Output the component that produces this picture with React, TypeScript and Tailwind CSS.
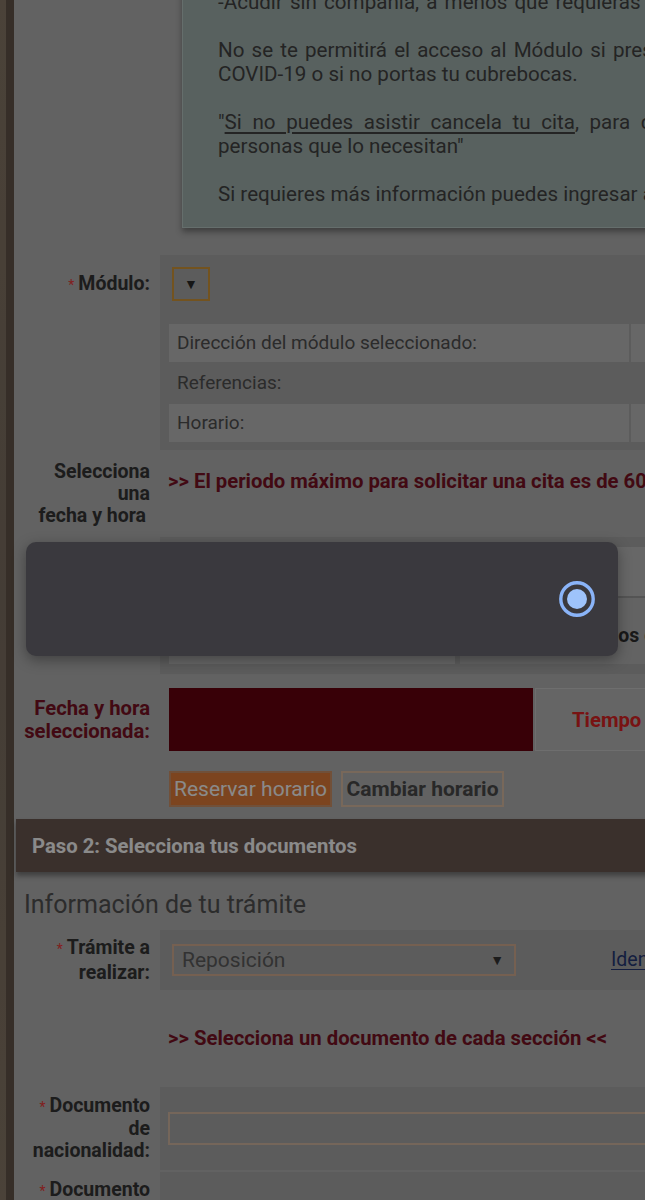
import React from "react";

function Req() {
  return <span className="mr-[4px] text-[14px] font-normal text-[#d83434]">*</span>;
}

export default function App() {
  return (
    <div className="relative h-[1200px] w-[645px] overflow-hidden font-['Roboto','Noto_Sans',sans-serif] text-[19.5px] leading-[22px] text-[#303030]">
      <div className="flex h-full">
        {/* wood strip */}
        <div className="flex w-[14px] shrink-0">
          <div className="w-[6px] bg-gradient-to-b from-[#7d6f5f] via-[#72665a] to-[#7d6f5f]" />
          <div className="w-[8px] bg-[#5a4d43]" />
        </div>

        <div className="w-[886px] shrink-0 bg-[#a3a3a3]">
          {/* info box */}
          <div className="mt-[-35px] ml-[168px] w-[700px] whitespace-nowrap border border-[#a9b8b4] bg-[#93a29e] pt-[24px] pb-[21px] pl-[35px] text-[20.6px] leading-[24px] text-[#3c3c3c] shadow-[0_4px_6px_rgba(0,0,0,0.35)]">
            <p className="[word-spacing:2px]">-Acudir sin compañía, a menos que requieras asistencia.</p>
            <p className="mt-[24px]">
              <span className="[word-spacing:2px]">No se te permitirá el acceso al Módulo si presentas síntomas de</span>
              <br />
              COVID-19 o si no portas tu cubrebocas.
            </p>
            <p className="mt-[24px]">
              <span className="[word-spacing:5.5px]">
                "<span className="underline underline-offset-[3px]">Si no puedes asistir cancela tu cita</span>, para dar oportunidad a otras
              </span>
              <br />
              personas que lo necesitan"
            </p>
            <p className="mt-[24px]">Si requieres más información puedes ingresar a la página.</p>
          </div>

          {/* Modulo row */}
          <div className="mt-[27px] grid grid-cols-[146px_1fr]">
            <div className="pt-[18px] pr-[10px] text-right font-bold">
              <Req />
              Módulo:
            </div>
            <div className="bg-[#9a9a9a] pt-[12px] pb-[8px] pl-[9px]">
              <div className="ml-[3px] flex h-[34px] w-[38px] items-center justify-center border-2 border-[#c08a35] text-[14px] leading-none text-[#262626]">
                ▼
              </div>
              <div className="mt-[23px] flex flex-col gap-[2px] text-[19px] text-[#484848]">
                <div className="flex h-[38px]">
                  <div className="flex w-[460px] items-center bg-[#acacac] pl-[8px]">Dirección del módulo seleccionado:</div>
                  <div className="ml-[2px] flex-1 bg-[#acacac]" />
                </div>
                <div className="flex h-[38px] items-center pl-[8px]">Referencias:</div>
                <div className="flex h-[38px]">
                  <div className="flex w-[460px] items-center bg-[#acacac] pl-[8px]">Horario:</div>
                  <div className="ml-[2px] flex-1 bg-[#acacac]" />
                </div>
              </div>
            </div>
          </div>

          {/* Selecciona fecha row */}
          <div className="grid h-[87px] grid-cols-[146px_1fr]">
            <div className="pt-[11px] pr-[10px] text-right font-bold">
              Selecciona
              <br />
              una
              <br />
              <span className="pr-[4px]">fecha y hora</span>
            </div>
            <div className="whitespace-nowrap pt-[20px] pl-[8px] text-[20.3px] font-bold text-[#6e1020]">
              &gt;&gt; El periodo máximo para solicitar una cita es de 60 días naturales &lt;&lt;
            </div>
          </div>

          {/* calendar row */}
          <div className="grid h-[137px] grid-cols-[146px_1fr]">
            <div />
            <div className="bg-[#9a9a9a] pt-[10px] pl-[9px]">
              <div className="h-[51px] border-b-2 border-[#8c8c8c] bg-[#acacac]" />
              <div className="flex h-[66px]">
                <div className="w-[286px] bg-[#acacac]" />
                <div className="ml-[5px] flex-1 whitespace-nowrap bg-[#a6a6a6] pt-[27px] pl-[104px] font-bold text-[#2b2b2b]">
                  Horarios disponibles
                </div>
              </div>
            </div>
          </div>

          {/* Fecha y hora seleccionada */}
          <div className="mt-[14px] grid h-[63px] grid-cols-[146px_1fr]">
            <div className="flex flex-col justify-center pr-[10px] text-right text-[20.3px] font-bold leading-[23px] text-[#6e1020]">
              <span>Fecha y hora</span>
              <span>seleccionada:</span>
            </div>
            <div className="flex pl-[9px]">
              <div className="w-[364px] bg-[#5e000d]" />
              <div className="ml-[2px] flex w-[400px] items-center whitespace-nowrap border border-[#b8b8b8] bg-[#a9a9a9] pl-[36px] text-[20.3px] font-bold text-[#c82020]">
                Tiempo restante:
              </div>
            </div>
          </div>

          {/* buttons */}
          <div className="mt-[20px] grid grid-cols-[146px_1fr]">
            <div />
            <div className="flex gap-[9px] pl-[9px]">
              <button className="h-[36px] w-[163px] border-2 border-[#bc8560] bg-[#cf7234] text-[21px] text-[#e6e6e6]">
                Reservar horario
              </button>
              <button className="h-[36px] w-[163px] border-2 border-[#c8ad96] bg-[#a3a3a3] text-[21px] font-bold text-[#444]">
                Cambiar horario
              </button>
            </div>
          </div>

          {/* Paso 2 header */}
          <div className="mt-[12px] ml-[2px] flex h-[53px] items-center bg-[#62504a] pl-[16px] text-[20.3px] font-bold text-[#e6e6e6] shadow-[0_4px_5px_rgba(0,0,0,0.35)]">
            Paso 2: Selecciona tus documentos
          </div>

          <h2 className="mt-[18px] pl-[10px] text-[25px] leading-[30px] font-normal text-[#4a4a4a]">
            Información de tu trámite
          </h2>

          {/* Tramite row */}
          <div className="mt-[10px] grid h-[60px] grid-cols-[146px_1fr]">
            <div className="flex flex-col justify-center pr-[10px] text-right font-bold leading-[23px]">
              <span>
                <Req />
                Trámite a
              </span>
              <span>realizar:</span>
            </div>
            <div className="flex items-center bg-[#9a9a9a] pl-[12px]">
              <div className="flex h-[32px] w-[344px] items-center justify-between border-2 border-[#c4a088] pr-[10px] pl-[8px] text-[21px] text-[#545454]">
                <span>Reposición</span>
                <span className="text-[14px] leading-none text-[#303030]">▼</span>
              </div>
              <a className="ml-[95px] whitespace-nowrap text-[#22336a] underline underline-offset-[3px]">
                Identificación oficial
              </a>
            </div>
          </div>

          {/* Selecciona documento */}
          <div className="mt-[37px] pl-[154px] text-[20.3px] font-bold whitespace-nowrap text-[#6e1020]">
            &gt;&gt; Selecciona un documento de cada sección &lt;&lt;
          </div>

          {/* Documento nacionalidad */}
          <div className="mt-[38px] grid h-[83px] grid-cols-[146px_1fr]">
            <div className="flex flex-col justify-center pr-[10px] text-right font-bold">
              <span>
                <Req />
                Documento
              </span>
              <span>de</span>
              <span>nacionalidad:</span>
            </div>
            <div className="bg-[#9a9a9a] pt-[25px] pl-[8px]">
              <div className="h-[33px] border-2 border-[#c4ab96]" />
            </div>
          </div>

          <div className="mt-[2px] grid h-[80px] grid-cols-[146px_1fr]">
            <div className="pt-[7px] pr-[10px] text-right font-bold">
              <Req />
              Documento
            </div>
            <div className="bg-[#9a9a9a]" />
          </div>
        </div>
      </div>

      {/* dim overlay */}
      <div className="absolute inset-0 bg-black/40" />

      {/* loading dialog */}
      <div className="absolute top-[542px] left-[26px] flex h-[114px] w-[592px] items-center justify-end rounded-[10px] bg-[#3a393e] pr-[23px] shadow-[0_4px_14px_rgba(0,0,0,0.35)]">
        <svg width="36" height="36" viewBox="0 0 36 36">
          <circle cx="18" cy="18" r="16.2" fill="none" stroke="#8ab4f8" strokeWidth="3.4" />
          <circle cx="18" cy="18" r="10" fill="#9ec3fb" />
        </svg>
      </div>
    </div>
  );
}
